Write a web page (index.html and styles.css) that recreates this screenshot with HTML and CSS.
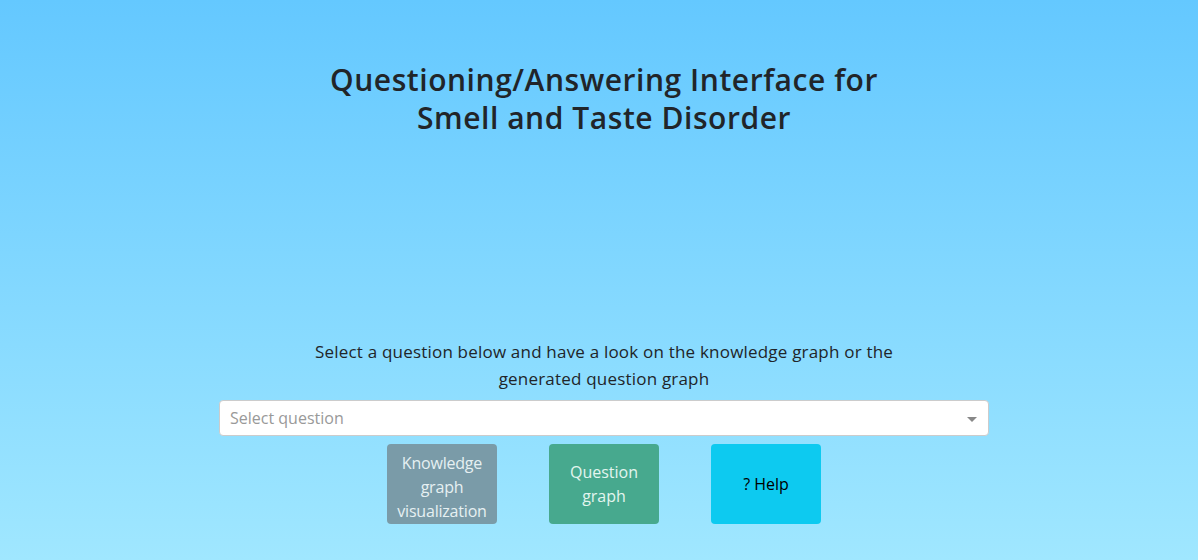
FILE: index.html
```html
<!DOCTYPE html>
<html lang="en">
<head>
<meta charset="utf-8">
<title>Questioning/Answering Interface</title>
<link rel="stylesheet" href="styles.css">
</head>
<body>
<div class="page">
  <h1 class="title">Questioning/Answering Interface for<br>Smell and Taste Disorder</h1>
  <div class="spacer"></div>
  <p class="lead">Select a question below and have a look on the knowledge graph or the<br>generated question graph</p>
  <div class="select">
    <span class="placeholder">Select question</span>
    <span class="arrow"></span>
  </div>
  <div class="buttons">
    <button class="btn btn-kg">Knowledge graph visualization</button>
    <button class="btn btn-qg">Question graph</button>
    <button class="btn btn-help">? Help</button>
  </div>
</div>
</body>
</html>
```

FILE: styles.css
```css
html, body {
  margin: 0;
  padding: 0;
  height: 100%;
}
body {
  background: linear-gradient(180deg, #64c8ff 0%, #a0e7ff 100%);
  font-family: "Open Sans", "Noto Sans", sans-serif;
  color: #212529;
  overflow: hidden;
}
.page {
  display: flex;
  flex-direction: column;
  align-items: center;
  padding-left: 10px;
  padding-top: 61px;
}
.title {
  margin: 0;
  font-size: 30px;
  font-weight: 600;
  line-height: 38px;
  text-align: center;
  white-space: nowrap;
  letter-spacing: 0.55px;
}
.spacer {
  height: 201px;
}
.lead {
  margin: 0;
  font-size: 17px;
  line-height: 27px;
  text-align: center;
  white-space: nowrap;
  letter-spacing: 0.2px;
}
.select {
  margin-top: 8px;
  box-sizing: border-box;
  width: 770px;
  height: 36px;
  background: #fff;
  border: 1px solid #cccccc;
  border-radius: 4px;
  display: flex;
  align-items: center;
  justify-content: space-between;
  padding: 0 11px 0 10px;
}
.placeholder {
  color: #999999;
  font-size: 16px;
}
.arrow {
  width: 0;
  height: 0;
  border-left: 5px solid transparent;
  border-right: 5px solid transparent;
  border-top: 5px solid #888888;
  margin-top: 2px;
}
.buttons {
  margin-top: 8px;
  display: flex;
  gap: 52px;
}
.btn {
  width: 110px;
  height: 80px;
  border: 0;
  border-radius: 4px;
  font-family: inherit;
  font-size: 16px;
  line-height: 24px;
  padding: 0 4px;
  text-align: center;
}
.btn-kg {
  background: #7a9ba8;
  color: #e6f0f2;
  padding-top: 6px;
  letter-spacing: -0.2px;
}
.btn-qg {
  background: #47a98e;
  color: #e3f5ef;
  padding: 0 18px;
}
.btn-help {
  background: #0dcaf0;
  color: #000;
}
```
